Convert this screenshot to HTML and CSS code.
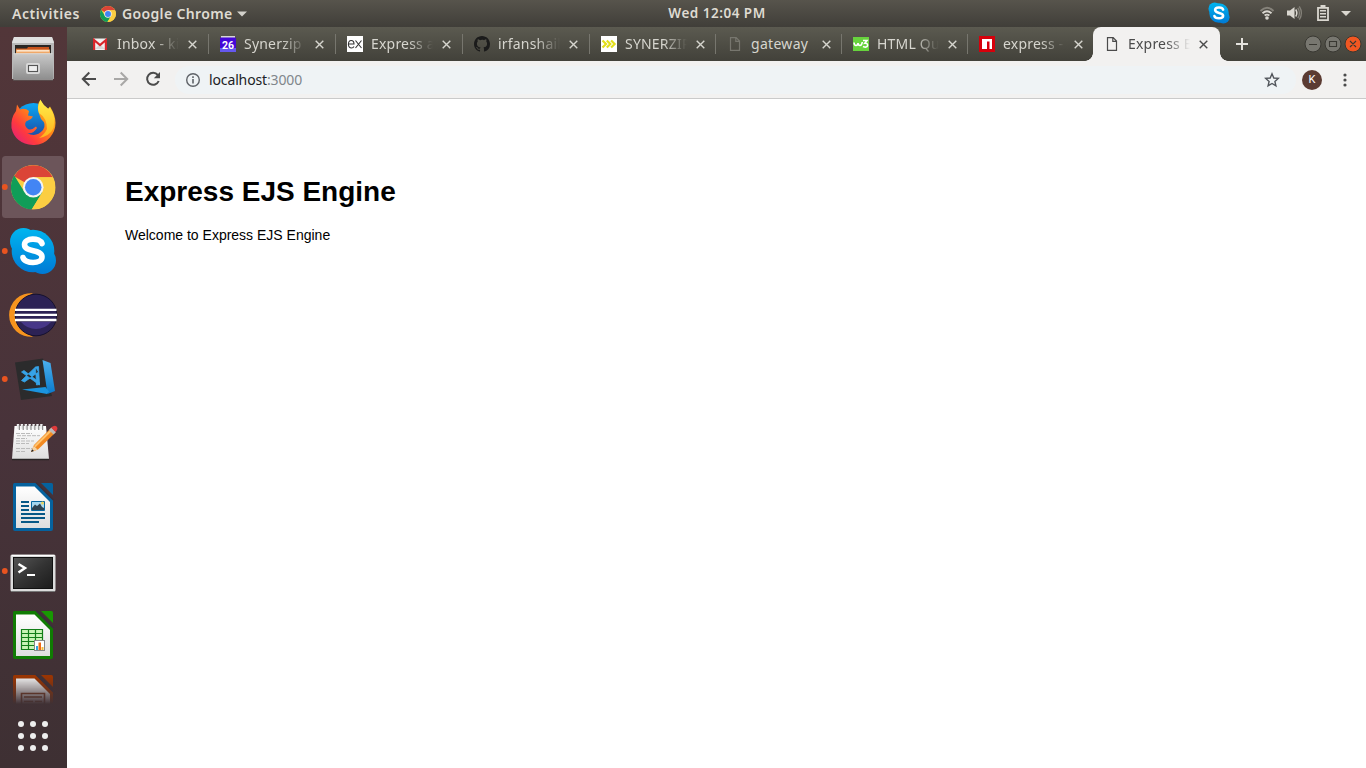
FILE: index.html
```html
<!DOCTYPE html>
<html lang="en">
<head>
<meta charset="utf-8">
<title>Express EJS Engine</title>
<link rel="stylesheet" href="styles.css">
</head>
<body>
<svg class="defs" width="0" height="0" aria-hidden="true">
  <defs>
    <linearGradient id="steel" x1="0" y1="0" x2="0" y2="1"><stop offset="0" stop-color="#c9c9c9"/><stop offset="1" stop-color="#8f8f8f"/></linearGradient>
    <linearGradient id="skype" gradientUnits="userSpaceOnUse" x1="0" y1="0" x2="0" y2="48"><stop offset="0" stop-color="#00b7f0"/><stop offset="1" stop-color="#0078d4"/></linearGradient>
    <linearGradient id="fox" x1="1" y1="0" x2="0" y2="1"><stop offset="0.1" stop-color="#ffd52e"/><stop offset="0.4" stop-color="#ff8a16"/><stop offset="0.7" stop-color="#ff3a3e"/><stop offset="1" stop-color="#d9178c"/></linearGradient>
    <linearGradient id="globe" x1="0" y1="0" x2="0" y2="1"><stop offset="0" stop-color="#0aa8f5"/><stop offset="1" stop-color="#203a95"/></linearGradient>
    <linearGradient id="flame" x1="0" y1="0" x2="0" y2="1"><stop offset="0" stop-color="#ffef4a"/><stop offset="1" stop-color="#ffb21c"/></linearGradient>
    <linearGradient id="paper" x1="0" y1="0" x2="0" y2="1"><stop offset="0" stop-color="#ffffff"/><stop offset="1" stop-color="#dedede"/></linearGradient>
    <linearGradient id="screen" x1="0" y1="0" x2="1" y2="1"><stop offset="0" stop-color="#555"/><stop offset="0.5" stop-color="#333"/><stop offset="1" stop-color="#1b1b1b"/></linearGradient>
    <linearGradient id="code" x1="0" y1="0" x2="0" y2="1"><stop offset="0" stop-color="#4bb0ef"/><stop offset="1" stop-color="#0a7acb"/></linearGradient>
    <symbol id="chrome" viewBox="0 0 44 44">
      <circle cx="22" cy="22" r="22" fill="#fbce43"/>
      <path d="M22 22 3 11A22 22 0 0 1 41.300 12H22Z" fill="#db4437"/>
      <path d="M22 22 13.500 27 3.200 10.500A22 22 0 0 0 20.500 44L31 27Z" fill="#109d58"/>
      <path d="M22 12H41.300A22 22 0 0 1 20.500 44L31 27Z" fill="#fbce43"/>
      <circle cx="22" cy="22" r="10.200" fill="#f4f4f4"/><circle cx="22" cy="22" r="8.200" fill="#4285f4"/>
    </symbol>
    <symbol id="skype-logo" viewBox="0 0 48 48">
      <g fill="url(#skype)"><circle cx="24" cy="24" r="21.300"/><circle cx="14.500" cy="14.500" r="13.500"/><circle cx="33.500" cy="33.500" r="13.500"/></g>
      <path d="M33 16.500C31 10.500 15.500 10.500 15.500 17.500C15.500 26 33 21.500 33 30C33 37.500 15.500 37 14 30.500" fill="none" stroke="#fff" stroke-width="5.600" stroke-linecap="round"/>
    </symbol>
    <symbol id="page" viewBox="0 0 16 16"><path d="M3.500 1.600H9.200L12.500 5V14.400H3.500ZM8.800 1.800V5.400H12.300" fill="none" stroke="currentColor" stroke-width="1.200"/></symbol>
    <symbol id="close" viewBox="0 0 9 9"><path d="M.7 .7 8.300 8.300M8.300 .7 .7 8.300" stroke="currentColor" stroke-width="1.400"/></symbol>
  </defs>
</svg>

<header class="panel">
  <span class="activities">Activities</span>
  <span class="app-menu">
    <svg width="16" height="16"><use href="#chrome"/></svg>
    <span class="app-name">Google Chrome</span>
    <svg width="10" height="6" viewBox="0 0 10 6"><path d="M0 .5H10L5 5.500Z" fill="#d3d1cb"/></svg>
  </span>
  <span class="clock">Wed 12:04 PM</span>
  <svg class="tray" width="166" height="27" viewBox="1200 0 166 27">
    <use href="#skype-logo" x="1208" y="2" width="22" height="22"/>
    <g fill="none" stroke-width="1.900">
      <path d="M1260.500 11Q1267 4.500 1273.500 11" stroke="#85827a"/>
      <path d="M1262.500 13.300Q1267 9.200 1271.500 13.300M1264.600 15.500Q1267 13.700 1269.400 15.500" stroke="#dad7d0"/>
      <circle cx="1267" cy="18" r="1.800" fill="#dad7d0"/>
      <path d="M1295.700 9.500Q1298 13 1295.700 16.500" stroke="#dad7d0" stroke-width="1.500"/>
      <path d="M1297.800 7.800Q1301 13 1297.800 18.200M1299.300 6.300Q1303.500 13 1299.300 19.700" stroke="#85827a" stroke-width="1.300"/>
    </g>
    <path d="M1287 10.500H1290L1294.500 7V19L1290 15.500H1287Z" fill="#dad7d0"/>
    <path d="M1318 7.800H1328V20.200H1318Z" fill="none" stroke="#dad7d0" stroke-width="1.800"/>
    <path d="M1320.500 5H1325.500V8H1320.500ZM1320 10H1326V11.500H1320ZM1320 13H1326V14.500H1320ZM1320 16H1326V17.500H1320Z" fill="#dad7d0"/>
    <path d="M1341 11H1351L1346 16Z" fill="#dad7d0"/>
  </svg>
</header>

<div class="desktop">
<nav class="dock">
  <div class="dock-list">
    <svg class="item" viewBox="0 27 67 64">
      <path d="M14 37H52L54 42V79H12V42Z" fill="#b9b9b9"/><path d="M14 37H52L54 43H12Z" fill="#e0e0e0"/>
      <path d="M15 45H51V55H15Z" fill="#2a2623"/>
      <path d="M16 48.500H27L28 47H49V56H16Z" fill="#c8531c"/><path d="M16 49.500H50V56H16Z" fill="#f0a868"/><path d="M17 50.200H49V51.500H17Z" fill="#fff1df"/>
      <path d="M13.500 53.500H52.500L53.500 79H13Z" fill="url(#steel)"/><path d="M13.500 53.700H52.500M13.500 79.500H53" stroke="#dedede" stroke-width=".8"/><path d="M13 80H53" stroke="#60605f"/>
      <rect x="26" y="63" width="14" height="11" rx="2" fill="#d9d9d9"/><rect x="28.500" y="65.500" width="9" height="6" fill="#eee" stroke="#555" stroke-width="1.100"/>
    </svg>
    <svg class="item" viewBox="0 91 67 64">
      <circle cx="33.500" cy="123" r="20" fill="url(#globe)"/>
      <path d="M17 104.500 20 109.500Q25 107.500 29 111L28 115.500 33 116.500 31 119 26 121.500Q23.500 125.500 28 129Q31 131 36 126.500L37 128Q33 134.500 27 133Q36 138 43 130Q47 124 41 119Q35 106 40.500 99.500Q42 105 48 109L50 106.500Q61 124 50 137.500Q43 145.500 33 145Q15 143.500 11.500 128Q10.500 118 16 111Z" fill="url(#fox)"/>
      <path d="M40.500 100Q36.500 107 39 113Q47 118 47 129Q44 135 39 138Q50 136 53.500 128Q56 116 50.500 109Q49 106 48.500 109Q43 105 40.500 100Z" fill="url(#flame)"/>
    </svg>
    <svg class="item" viewBox="0 155 67 64">
      <rect x="2" y="156" width="62" height="62" rx="3.500" fill="#6c555a"/><circle cx="4.800" cy="187" r="2.900" fill="#e95420"/>
      <use href="#chrome" x="11" y="165" width="44.500" height="44.500"/>
    </svg>
    <svg class="item" viewBox="0 219 67 64"><circle cx="4.800" cy="251" r="2.900" fill="#e95420"/><use href="#skype-logo" x="9" y="227" width="48" height="48"/></svg>
    <svg class="item" viewBox="0 283 67 64">
      <path d="M33 293.300A21.800 21.800 0 1 0 33 336.700A24 24 0 0 1 33 293.300Z" fill="#f7941e"/>
      <circle cx="36" cy="315" r="20.800" fill="#2c2255" stroke="#151130"/>
      <path d="M21 322H51Q45 329 36 329T21 322Z" fill="#473788"/>
      <path d="M15 309.800H56.500M14.500 314.900H57M15 320H56.500" stroke="#fff" stroke-width="2.300"/>
    </svg>
    <svg class="item" viewBox="0 347 67 64">
      <circle cx="4.800" cy="379" r="2.900" fill="#e95420"/>
      <path d="M15 362.500 43 358.500 52 396 21 400Z" fill="#2b2b2c"/>
      <path d="M42.500 360 50.500 363 55 391 47.500 394Z" fill="url(#code)"/><path d="M22 389.500 45.500 387 49 391.500 47 394Z" fill="#1b94df"/>
      <path d="M21.500 372 24 370.500 39.500 382.500V385ZM35.500 367 38.500 366.500 39.500 384.500 36.500 385ZM35.500 367 21.500 380.500 24.500 382 38.500 372Z" fill="#36a3e8" stroke="#36a3e8" stroke-width=".8"/>
    </svg>
    <svg class="item" viewBox="0 411 67 64">
      <path d="M14.500 426H46L49 459H12Z" fill="url(#paper)"/><path d="M12 459.500H49" stroke="#282525" stroke-width="1.500"/>
      <path d="M18 424v5M21.900 424v5M25.800 424v5M29.700 424v5M33.600 424v5M37.500 424v5M41.400 424v5" stroke="#eee" stroke-width="2.400"/><path d="M19.300 425v5M23.200 425v5M27.100 425v5M31 425v5M34.900 425v5M38.800 425v5M42.700 425v5" stroke="#777" stroke-width="1"/>
      <path d="M16 433.500H32M17 435.700H40M16 438.500H27M16 441H34M16 443.500H29M16 448.500H34M16 451.500H26" stroke="#bbb" stroke-width="1" stroke-dasharray="4 1"/>
      <path d="M31 452 34 445 51 428 55.500 432.500 38 449.500Z" fill="#f28a22"/><path d="M34.800 446.500 51.500 430" stroke="#ffc36e" stroke-width="2"/><path d="M31 452 33.800 446 37.500 449.500Z" fill="#f3d2a4"/><path d="M31 452 32 449.300 34 451Z" fill="#222"/>
      <path d="M49 430 51.500 427.500 56 432 53.500 434.500Z" fill="#bbb"/><path d="M51 427.500Q56 424 57.500 428Q57.500 430.500 55.500 432Z" fill="#df3b3b"/>
    </svg>
    <svg class="item" viewBox="0 475 67 64">
      <path d="M14.500 483H36L53 500V529Q53 531 51 531H15Q13 531 13 529V485Q13 483 14.500 483Z" fill="#05629e"/><path d="M16 486.500H34.500L50 502V528H16Z" fill="url(#paper)"/>
      <path d="M36 482.500 53.500 500" stroke="#3b313c" stroke-width="1.700"/><path d="M41 483H51.500Q53 483 53 485V495Z" fill="#05629e"/>
      <path d="M21 502H29M21 506H29M21 510H29M21 514H45M21 518H45M21 522H39" stroke="#075886" stroke-width="1.800"/>
      <path d="M31.500 501.500H44.500V510.500H31.500Z" fill="#a6d8ef" stroke="#07679f"/><path d="M32 510V508L35 504.500 37 506 40 503.500 42 507 44 508V510Z" fill="#304451"/><circle cx="42.500" cy="503" r="1.500" fill="#ead25e"/>
    </svg>
    <svg class="item" viewBox="0 539 67 64">
      <circle cx="4.800" cy="571" r="2.900" fill="#e95420"/>
      <rect x="10.500" y="554.500" width="45" height="37" rx="1.500" fill="#dcdcdc"/><path d="M11 591.500H55" stroke="#777"/><path d="M12 555.500H54.500" stroke="#fff"/><rect x="13.500" y="557.500" width="39" height="31" fill="url(#screen)" stroke="#111"/>
      <path d="M18.500 564 25 568 18.500 572.500" fill="none" stroke="#fff" stroke-width="2.500"/><path d="M27 575H35" stroke="#fff" stroke-width="2"/>
    </svg>
    <svg class="item" viewBox="0 603 67 64">
      <path d="M14.500 611H36L53 628V657Q53 659 51 659H15Q13 659 13 657V613Q13 611 14.500 611Z" fill="#107c03"/><path d="M16 614.500H34.500L50 630V656H16Z" fill="url(#paper)"/>
      <path d="M36 610.500 53.500 628" stroke="#3b313c" stroke-width="1.700"/><path d="M41 611H51.500Q53 611 53 613V623Z" fill="#189802"/>
      <path d="M21.500 629.500H42.500V649.500H21.500Z" fill="#c8f4b5"/><path d="M21.500 629.500H42.500V649.500H21.500ZM21.500 633.500H42.500M21.500 637.500H42.500M21.500 641.500H42.500M21.500 645.500H42.500M28.500 629V650M35.500 629V650" fill="none" stroke="#127e18" stroke-width="1.200"/>
      <rect x="34.500" y="640.500" width="10" height="10" fill="#fff" stroke="#888"/><path d="M36 646H38V650H36Z" fill="#31a4df"/><path d="M38.500 642.500H41V650H38.500Z" fill="#f06a15"/><path d="M41.500 647H43.500V650H41.500Z" fill="#f4bb39"/>
    </svg>
    <svg class="item" viewBox="0 667 67 64">
      <path d="M14.500 675H36L53 692V731H13V677Q13 675 14.500 675Z" fill="#993503"/><path d="M16 678.500H34.500L50 694V731H16Z" fill="#eee"/>
      <path d="M36 674.500 53.500 692" stroke="#3b313c" stroke-width="1.700"/><path d="M41 675H51.500Q53 675 53 677V687Z" fill="#993503"/>
      <path d="M21.500 707V693.500H44.500V707M24 697H42M24 701.500H33M35 701.500H42" fill="none" stroke="#843b19" stroke-width="1.600"/>
    </svg>
  </div>
  <svg class="apps" viewBox="0 704 67 64" fill="#eee"><circle cx="21" cy="724" r="3"/><circle cx="33" cy="724" r="3"/><circle cx="45" cy="724" r="3"/><circle cx="21" cy="736" r="3"/><circle cx="33" cy="736" r="3"/><circle cx="45" cy="736" r="3"/><circle cx="21" cy="748" r="3"/><circle cx="33" cy="748" r="3"/><circle cx="45" cy="748" r="3"/></svg>
</nav>

<main class="browser">
  <div class="tabs">
    <div class="tab"><svg class="fav" viewBox="0 0 16 16"><path d="M0 2.500H14V14H0Z" fill="#f1f1f1"/><path d="M2 13 7 8 12 13Z" fill="#d7d7d7"/><path d="M1.100 14V4L7 9 12.900 4V14" fill="none" stroke="#d9252a" stroke-width="2.200"/></svg><span class="label">Inbox - kiran</span><svg class="x"><use href="#close"/></svg></div>
    <div class="tab"><svg class="fav" viewBox="0 0 16 16"><path d="M1 0H15V3H1Z" fill="#d5d5d5"/><rect y="1.500" width="16" height="14.500" rx="1" fill="#4408d8"/><path d="M0 12H16V16H0Z" fill="#6558ee"/><text x="8" y="12.500" text-anchor="middle" class="cal">26</text></svg><span class="label">Synerzip - C</span><svg class="x"><use href="#close"/></svg></div>
    <div class="tab"><svg class="fav" viewBox="0 0 16 16"><path d="M0 0H16V16H0Z" fill="#fff"/><path d="M1.500 8H7Q7 4.500 4.200 4.500T1.400 8.500Q1.700 12 4.500 12 6.200 12 7 10.500M8.500 4.500 14.500 12M14.500 4.500 8.500 12" fill="none" stroke="#333" stroke-width="1.100"/></svg><span class="label">Express app</span><svg class="x"><use href="#close"/></svg></div>
    <div class="tab"><svg class="fav" viewBox="0 0 16 16"><path fill="#1b1b1b" d="M8 0C3.580 0 0 3.580 0 8c0 3.540 2.290 6.530 5.470 7.590.4.070.55-.17.55-.38 0-.19-.01-.82-.01-1.490-2.010.37-2.530-.49-2.690-.94-.09-.23-.48-.94-.82-1.130-.28-.15-.68-.52-.01-.53.63-.01 1.080.58 1.230.82.72 1.210 1.870.87 2.330.66.070-.52.280-.87.510-1.070-1.780-.2-3.640-.89-3.640-3.950 0-.87.310-1.590.82-2.150-.08-.2-.36-1.020.08-2.120 0 0 .67-.21 2.200.82A7.600 7.600 0 0 1 8 3.860c.68 0 1.360.09 2 .27 1.530-1.040 2.200-.82 2.200-.82.440 1.100.160 1.920.080 2.120.510.560.820 1.270.820 2.150 0 3.070-1.870 3.750-3.650 3.950.290.250.540.730.540 1.480 0 1.070-.010 1.930-.010 2.200 0 .210.150.460.550.380A8 8 0 0 0 16 8c0-4.420-3.580-8-8-8Z"/></svg><span class="label">irfanshaikh</span><svg class="x"><use href="#close"/></svg></div>
    <div class="tab"><svg class="fav" viewBox="0 0 16 16"><path d="M0 0H16V16H0Z" fill="#fff"/><path d="M1.500 4.500 5 8 1.500 11.500M5.800 4.500 9.300 8 5.800 11.500M10.100 4.500 13.600 8 10.100 11.500" fill="none" stroke="#e3df1c" stroke-width="2.200"/></svg><span class="label">SYNERZIP</span><svg class="x"><use href="#close"/></svg></div>
    <div class="tab"><svg class="fav dim"><use href="#page"/></svg><span class="label">gateway</span><svg class="x"><use href="#close"/></svg></div>
    <div class="tab"><svg class="fav" viewBox="0 0 16 16"><path d="M0 1H16V15H0Z" fill="#67d33d"/><path d="M1 6.500Q1.200 9.500 3 9.500T5 7Q5.200 9.500 7 9.500T9.300 6M10 4.500H14L11.800 7.300Q15 7 14.500 9.800 13.800 12 10 10.500" fill="none" stroke="#fff" stroke-width="1.600"/></svg><span class="label">HTML Quiz</span><svg class="x"><use href="#close"/></svg></div>
    <div class="tab"><svg class="fav" viewBox="0 0 16 16"><path d="M0 0H16V16H0Z" fill="#d6000b"/><path d="M3 3H13V13H10.500V5.500H8V13H3Z" fill="#fff"/></svg><span class="label">express - n</span><svg class="x"><use href="#close"/></svg></div>
    <div class="tab active"><svg class="fav"><use href="#page"/></svg><span class="label">Express EJS</span><svg class="x"><use href="#close"/></svg></div>
    <svg class="strip-end" width="146" height="34" viewBox="1220 27 146 34">
      <path d="M1236 44H1248M1242 38V50" stroke="#e4e2dd" stroke-width="2"/>
      <g stroke="#393832"><circle cx="1313" cy="44" r="8" fill="#787770"/><circle cx="1333" cy="44" r="8" fill="#787770"/><circle cx="1353" cy="44" r="8" fill="#f15722"/></g>
      <path d="M1309 44.500H1317M1329.500 41.500H1336.500V46.500H1329.500ZM1350 41 1356 47M1356 41 1350 47" fill="none" stroke="#393832" stroke-width="1.100"/>
    </svg>
  </div>
  <div class="toolbar">
    <svg class="nav" width="101" height="37" viewBox="67 61 101 37" fill="none" stroke-width="2">
      <path d="M96 79H83M89.300 72.500 82.800 79 89.300 85.500" stroke="#4b4b4b"/><path d="M114 79H127M120.700 72.500 127.200 79 120.700 85.500" stroke="#a8a7a6"/>
      <path d="M157.800 75A6 6 0 1 0 158.700 81" stroke="#4b4b4b"/><path d="M160 72V78.200H153.800Z" fill="#4b4b4b"/>
    </svg>
    <div class="omnibox">
      <svg width="14" height="14" viewBox="0 0 14 14"><circle cx="7" cy="7" r="6.300" fill="none" stroke="#5f6368" stroke-width="1.400"/><path d="M7 6V10.500M7 3.300V5" stroke="#5f6368" stroke-width="1.600"/></svg>
      <span class="url">localhost<span class="port">:3000</span></span>
      <svg class="star" width="16" height="16" viewBox="0 0 16 16"><path d="M8 1.800 9.800 6 14.300 6.400 10.900 9.400 11.900 13.900 8 11.500 4.100 13.900 5.100 9.400 1.700 6.400 6.200 6Z" fill="none" stroke="#50545a" stroke-width="1.400"/></svg>
    </div>
    <span class="avatar">K</span>
    <svg class="more" width="4" height="14" viewBox="0 0 4 14" fill="#4b4b4b"><circle cx="2" cy="2" r="1.600"/><circle cx="2" cy="7" r="1.600"/><circle cx="2" cy="12" r="1.600"/></svg>
  </div>
  <section class="document">
    <h1>Express EJS Engine</h1>
    <p>Welcome to Express EJS Engine</p>
  </section>
</main>
</div>
</body>
</html>
```
FILE: styles.css
```css
* { box-sizing: border-box; }
body { margin: 0; width: 1366px; height: 768px; overflow: hidden; display: flex; flex-direction: column; font-family: "Noto Sans", "Open Sans", sans-serif; background: #fff; }
svg { display: block; flex: none; }
.defs { position: absolute; }

.panel { height: 27px; flex: none; display: grid; grid-template-columns: 100px 500px 234px 1fr; align-items: center; background: linear-gradient(#57544c, #403e39); color: #dfdbd2; font-size: 14px; font-weight: 600; white-space: nowrap; }
.activities { padding-left: 12px; letter-spacing: .55px; }
.app-menu { display: flex; align-items: center; gap: 6px; }
.app-name { width: 110px; letter-spacing: .35px; }
.clock { text-align: center; font-size: 13.5px; padding-bottom: 1px; letter-spacing: .5px; }
.tray { justify-self: end; }

.desktop { flex: 1; min-height: 0; display: flex; }
.dock { width: 67px; flex: none; display: flex; flex-direction: column; background: linear-gradient(#523639, #48333a 55%, #3e3033); }
.dock-list { height: 677px; overflow: hidden; mask-image: linear-gradient(#000 650px, transparent 677px); }
.item, .apps { width: 67px; height: 64px; }
.app-menu svg:last-child { margin-left: -1px; }

.browser { flex: 1; min-width: 0; display: flex; flex-direction: column; }
.tabs { height: 34px; display: flex; padding-left: 15px; background: linear-gradient(#5b5a50, #42413a); color: #d6d5ce; }
.tab { width: 126px; flex: none; display: flex; align-items: center; padding-left: 11px; background: linear-gradient(#77766e, #77766e) right 7px / 1px 20px no-repeat; }
.tab:nth-child(-n+4) { width: 127px; }
.fav { width: 16px; height: 16px; }
.fav.dim { color: #77766e; }
.cal { font: 700 10.500px "Roboto", sans-serif; fill: #fff; }
.label { width: 62px; margin-left: 8px; overflow: hidden; white-space: nowrap; font-size: 14px; line-height: 20px; letter-spacing: .2px; mask-image: linear-gradient(90deg, #000 38px, transparent 62px); }
.tab:nth-child(6) .label { mask-image: none; letter-spacing: .3px; }
.x { width: 9px; height: 9px; margin-left: 9px; }
.tab:nth-child(8) { background: none; }
.tab.active { position: relative; width: 127px; margin-left: -1px; background: #f2f1f0; color: #4b4b4b; border-radius: 8px 8px 0 0; }
.tab.active::before, .tab.active::after { content: ""; position: absolute; bottom: 0; width: 8px; height: 8px; }
.tab.active::before { left: -8px; background: radial-gradient(circle at 0 0, transparent 7.500px, #f2f1f0 8px); }
.tab.active::after { right: -8px; background: radial-gradient(circle at 100% 0, transparent 7.500px, #f2f1f0 8px); }
.strip-end { margin-left: auto; }

.toolbar { height: 38px; flex: none; display: flex; align-items: center; background: #f2f1f0; border-bottom: 1px solid #cacaca; }
.omnibox { width: 1121px; height: 28px; margin-left: 7px; padding: 0 16px 0 11px; display: flex; align-items: center; border-radius: 14px; background: #eff3f5; }
.url { margin-left: 9px; font-size: 14px; line-height: 20px; letter-spacing: -.13px; color: #202124; }
.port { color: #80868b; }
.star { margin-left: auto; }
.avatar { width: 20px; height: 20px; margin-left: 6px; border-radius: 50%; background: #5b3b32; color: #fff; font: 11px/20px Roboto, sans-serif; text-align: center; }
.more { margin-left: 20.500px; }

.document { flex: 1; padding: 77px 58px; background: #fff; color: #000; font-family: "Liberation Sans", Arial, sans-serif; }
.document h1 { margin: 0 0 19px; font-size: 28px; line-height: 32px; }
.document p { margin: 0; font-size: 14px; line-height: 16px; }
```
